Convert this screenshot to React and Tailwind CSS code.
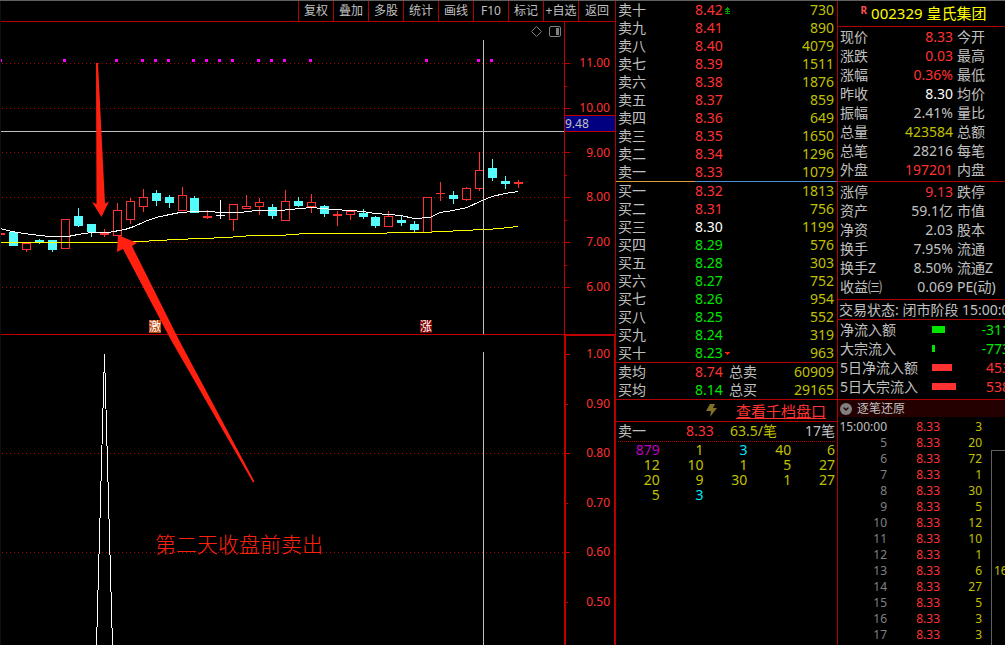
import { ChevronDown } from "lucide-react";

const RED = "#ff3232";
const CYAN = "#54fcfc";

const tools = ["复权", "叠加", "多股", "统计", "画线", "F10", "标记", "+自选", "返回"];

// [x, top, bottom, wickTop, wickBottom, kind]  r: hollow red, f: solid red, c: cyan, w: white
const candles = [
  [-4, 233, 234, 231, 238, "f"],
  [9, 232, 245, 232, 245, "c"],
  [22, 243, 249, 243, 251, "r"],
  [35, 240, 242, 239, 243, "c"],
  [48, 240, 249, 240, 251, "c"],
  [61, 219, 248, 219, 248, "r"],
  [74, 216, 225, 208, 226, "c"],
  [87, 224, 231, 224, 236, "c"],
  [100, 233, 234, 229, 236, "f"],
  [113, 210, 235, 203, 235, "r"],
  [126, 201, 219, 198, 223, "r"],
  [139, 197, 206, 189, 211, "r"],
  [152, 193, 200, 190, 205, "c"],
  [165, 197, 202, 195, 207, "c"],
  [178, 195, 210, 187, 210, "r"],
  [190, 198, 212, 196, 212, "c"],
  [203, 216, 217, 210, 218, "f"],
  [216, 215, 215, 200, 218, "w"],
  [229, 204, 219, 204, 230, "r"],
  [242, 206, 208, 195, 208, "r"],
  [255, 202, 206, 198, 214, "r"],
  [268, 207, 215, 204, 218, "c"],
  [281, 201, 220, 190, 220, "r"],
  [294, 201, 205, 197, 206, "c"],
  [307, 202, 206, 194, 212, "r"],
  [320, 206, 213, 205, 216, "c"],
  [333, 214, 215, 211, 225, "f"],
  [346, 211, 214, 211, 219, "r"],
  [359, 213, 216, 209, 218, "c"],
  [371, 217, 225, 216, 227, "c"],
  [384, 216, 226, 211, 226, "r"],
  [397, 220, 222, 216, 225, "c"],
  [410, 224, 229, 221, 231, "c"],
  [423, 197, 232, 197, 232, "r"],
  [436, 193, 193, 182, 200, "f"],
  [449, 195, 198, 191, 203, "c"],
  [462, 188, 199, 187, 200, "r"],
  [475, 170, 188, 152, 190, "r"],
  [488, 168, 177, 159, 180, "c"],
  [501, 181, 183, 176, 188, "c"],
  [514, 182, 183, 180, 187, "f"],
];

const signals = [-1, 63, 115, 141, 154, 167, 192, 205, 218, 231, 257, 270, 283, 309, 425, 477, 490];

const average =
  "0,228 12,231 24,233 40,235 50,236 68,236 78,234 91,232 108,232 125,229 134,226 145,221 156,217 165,215 180,212 194,211 210,211 220,212 240,212 256,210 280,210 300,208 312,207 333,209 350,210 363,211 375,213 401,215 414,218 430,217 440,212 453,210 467,207 480,201 492,196 505,193 518,191";
const baseline =
  "0,242 111,242 140,241 176,239 201,238 227,237 253,235 280,235 306,233 357,233 418,232 446,231 460,230 486,229 500,228 518,226";

const sells = [
  ["卖十", "8.42", 730],
  ["卖九", "8.41", 890],
  ["卖八", "8.40", 4079],
  ["卖七", "8.39", 1511],
  ["卖六", "8.38", 1876],
  ["卖五", "8.37", 859],
  ["卖四", "8.36", 649],
  ["卖三", "8.35", 1650],
  ["卖二", "8.34", 1296],
  ["卖一", "8.33", 1079],
];
const buys = [
  ["买一", "8.32", 1813],
  ["买二", "8.31", 756],
  ["买三", "8.30", 1199],
  ["买四", "8.29", 576],
  ["买五", "8.28", 303],
  ["买六", "8.27", 752],
  ["买七", "8.26", 954],
  ["买八", "8.25", 552],
  ["买九", "8.24", 319],
  ["买十", "8.23", 963],
];

const lots = ["879", "1", "3", "40", "6", "12", "10", "1", "5", "27", "20", "9", "30", "1", "27", "5", "3"];
const lotColor = { 0: "text-[#c000c0]", 2: "text-[#00e6ff]", 16: "text-[#00e6ff]" };

const red = "text-[#ff3232]";
const green = "text-[#00e600]";
const olive = "text-[#c0c000]";
const grey = "text-[#c0c0c0]";

const quoteTop = [
  ["现价", "8.33", "今开", red],
  ["涨跌", "0.03", "最高", red],
  ["涨幅", "0.36%", "最低", red],
  ["昨收", "8.30", "均价", "text-white"],
  ["振幅", "2.41%", "量比", grey],
  ["总量", "423584", "总额", olive],
  ["总笔", "28216", "每笔", grey],
  ["外盘", "197201", "内盘", red],
];
const quoteBottom = [
  ["涨停", "9.13", "跌停", red],
  ["资产", "59.1亿", "市值", grey],
  ["净资", "2.03", "股本", grey],
  ["换手", "7.95%", "流通", grey],
  ["换手Z", "8.50%", "流通Z", grey],
  ["收益㈢", "0.069", "PE(动)", grey],
];
const flows = [
  ["净流入额", 13, "-311", true],
  ["大宗流入", 3, "-773", true],
  ["5日净流入额", 20, "453", false],
  ["5日大宗流入", 24, "538", false],
];
const ticks = [
  ["15:00:00", 3], ["5", 20], ["6", 72], ["7", 1], ["8", 30], ["9", 5], ["10", 12],
  ["11", 10], ["12", 1], ["13", 6], ["14", 27], ["15", 5], ["16", 3], ["17", 3],
];

function priceColor(price) {
  if (price === "8.30") return "text-white";
  return price > "8.30" ? red : green;
}

function Candle({ data }) {
  const [x, top, bottom, wickTop, wickBottom, kind] = data;
  const color = kind === "c" ? CYAN : kind === "w" ? "#ffffff" : RED;
  const cx = x + 4;
  if (kind === "r") {
    return (
      <g fill={color}>
        {wickTop < top && <rect x={cx} y={wickTop} width="1" height={top - wickTop} />}
        {wickBottom > bottom && <rect x={cx} y={bottom} width="1" height={wickBottom - bottom + 1} />}
        <rect x={x + 0.5} y={top + 0.5} width="8" height={bottom - top} fill="none" stroke={color} />
      </g>
    );
  }
  return (
    <g fill={color}>
      <rect x={cx} y={wickTop} width="1" height={wickBottom - wickTop + 1} />
      <rect x={x} y={top} width="9" height={bottom - top + 1} />
    </g>
  );
}

function GridLine({ y }) {
  return <line x1="2" x2="564" y1={y + 0.5} y2={y + 0.5} stroke="#b00000" strokeDasharray="1 3" />;
}

function PriceChart() {
  return (
    <section className="relative flex flex-[312_1_0%] overflow-hidden">
      <svg
        className="absolute inset-0 size-full"
        viewBox="0 22 615 312"
        preserveAspectRatio="none"
        shapeRendering="crispEdges"
        aria-hidden="true"
      >
        {[63, 108, 152, 197, 242, 287].map((y) => (
          <g key={y}>
            <GridLine y={y} />
            <rect x="565" y={y} width="5" height="1" fill="#c00000" />
          </g>
        ))}
        {[86, 130, 175, 220, 265].map((y) => (
          <rect key={y} x="565" y={y} width="2" height="1" fill="#c00000" />
        ))}
        <rect x="564" y="22" width="1" height="312" fill="#c00000" />
        {signals.map((x) => (
          <rect key={x} x={x} y="59" width="3" height="3" fill="#ff00ff" />
        ))}
        <rect x="0" y="131" width="564" height="1" fill="#c0c0c0" />
        {candles.map((c) => (
          <Candle key={c[0]} data={c} />
        ))}
        <polyline points={average} transform="translate(0 .5)" fill="none" stroke="#ffffff" />
        <polyline points={baseline} transform="translate(0 .5)" fill="none" stroke="#ffff00" />
        <rect x="483" y="40" width="1" height="294" fill="#c0c0c0" />
        <g fill="none" stroke="#808080" shapeRendering="auto">
          <path d="M536.5 26.5l5 5-5 5-5-5z" />
          <rect x="549.5" y="26.5" width="11" height="10" rx="1.5" />
          <rect x="556" y="28" width="3" height="7" fill="#808080" stroke="none" />
        </g>
      </svg>
      <span className="absolute bottom-px left-[149px] bg-[#c04a10] text-[12px] leading-[13px] text-white">激</span>
      <span className="absolute bottom-px left-[420px] bg-[#800000] text-[12px] leading-[13px] text-white">涨</span>
      <div className="relative ml-auto flex w-[50px] flex-col justify-between pt-[31px] pr-[5px] pb-[37px] text-right text-[12px] leading-5 text-[#ff3232]">
        {["11.00", "10.00", "9.00", "8.00", "7.00", "6.00"].map((v) => (
          <span key={v}>{v}</span>
        ))}
        <span className="absolute top-[93px] left-0 w-full border-y border-[#c00000] bg-[#000080] text-left leading-[15px] text-[#c0c0c0]">
          9.48
        </span>
      </div>
    </section>
  );
}

function SignalChart() {
  return (
    <section className="relative flex flex-[310_1_0%] overflow-hidden">
      <svg
        className="absolute inset-0 size-full"
        viewBox="0 335 615 310"
        preserveAspectRatio="none"
        shapeRendering="crispEdges"
        aria-hidden="true"
      >
        <GridLine y={453} />
        <GridLine y={552} />
        {[354, 453, 552].map((y) => (
          <rect key={y} x="565" y={y} width="5" height="1" fill="#c00000" />
        ))}
        {[404, 503, 602].map((y) => (
          <rect key={y} x="565" y={y} width="3" height="1" fill="#c00000" />
        ))}
        <path d="M564 335h51v1h-49v309h-2z M614 335h1v310h-1z" fill="#c00000" />
        <path d="M96.5 645L104.5 354L112.5 645" fill="none" stroke="#ffffff" />
        <rect x="483" y="352" width="1" height="293" fill="#c0c0c0" />
      </svg>
      <p className="absolute top-[194px] left-[155px] text-[21px] leading-[30px] font-light text-[#ff2010]">
        第二天收盘前卖出
      </p>
      <div className="relative ml-auto flex w-[50px] flex-col justify-between pt-[9px] pr-[5px] pb-[33px] text-right text-[12px] leading-5 text-[#ff3232]">
        {["1.00", "0.90", "0.80", "0.70", "0.60", "0.50"].map((v) => (
          <span key={v}>{v}</span>
        ))}
      </div>
    </section>
  );
}

function Charts() {
  return (
    <main className="relative flex min-w-0 flex-1 flex-col">
      <nav className="flex h-[21px] justify-end border-b border-[#b00000]">
        {tools.map((t) => (
          <button
            key={t}
            type="button"
            className="w-[35px] border-l border-[#b00000] text-center text-[12px] leading-5 whitespace-nowrap last:w-[37px]"
          >
            {t}
          </button>
        ))}
      </nav>
      <PriceChart />
      <div className="h-px bg-[#c00000]" />
      <SignalChart />
      <svg
        className="pointer-events-none absolute inset-0 size-full"
        viewBox="0 1 615 644"
        preserveAspectRatio="none"
        aria-hidden="true"
      >
        <rect x="0" y="1" width="1" height="644" fill="#101010" />
        <g fill="#ff2010">
          <path d="M96 63L98 63L105 203.500L109 201.500L101.500 217L92 202L96.500 204z" />
          <path d="M118 235L137 243L132 246L179 340L254.500 481.500L253 482.500L171 340L123 249L117 252z" />
        </g>
      </svg>
    </main>
  );
}

function BookRows({ rows }) {
  return (
    <table className="w-full table-fixed text-[14px] leading-[18px]">
      <tbody>
        {rows.map(([label, price, volume]) => (
          <tr key={label}>
            <th scope="row" className="w-[79px] p-0 pl-[2px] text-left font-normal">{label}</th>
            <td className={"p-0 " + priceColor(price)}>
              <span className="flex items-center gap-[2px]">
                {price}
                {price === "8.42" && (
                  <svg width="5" height="7" viewBox="0 0 5 7" fill="#00a000" shapeRendering="crispEdges" aria-hidden="true">
                    <path d="M2 0h1v1h1v1h1v1H3v1h2v1H3v1h2v1H0V6h2V5H0V4h2V3H0V2h1V1h1z" />
                  </svg>
                )}
                {price === "8.23" && (
                  <svg width="5" height="3" viewBox="0 0 5 3" fill="#ff2010" shapeRendering="crispEdges" aria-hidden="true">
                    <path d="M0 0h5v1H4v1H3v1H2V2H1V1H0z" />
                  </svg>
                )}
              </span>
            </td>
            <td className="w-[60px] p-0 pr-[3px] text-right text-[#c0c000]">{volume}</td>
          </tr>
        ))}
      </tbody>
    </table>
  );
}

function OrderBook() {
  return (
    <section className="w-[222px] shrink-0 border-l border-[#b00000] text-[14px] leading-[18px]">
      <BookRows rows={sells} />
      <div className="flex h-px">
        <div className="w-[79px] bg-[#e0a040]" />
        <div className="flex-1 bg-[#4a90d9]" />
      </div>
      <BookRows rows={buys} />
      <div className="border-y border-[#b00000]">
        {[
          ["卖均", "8.74", "总卖", 60909, red],
          ["买均", "8.14", "总买", 29165, green],
        ].map(([a, p, b, v, c]) => (
          <div key={a} className="flex pr-[3px] pl-[2px]">
            <span className="w-[77px]">{a}</span>
            <span className={"w-[34px] " + c}>{p}</span>
            <span>{b}</span>
            <span className="ml-auto text-[#c0c000]">{v}</span>
          </div>
        ))}
      </div>
      <div className="flex h-[22px] items-center justify-end gap-[19px] border-b border-[#b00000] pr-[11px]">
        <svg width="11" height="13" viewBox="0 0 11 13" fill="#807028" aria-hidden="true">
          <path d="M4 0h5L7 4h4L4 13l1-6H0z" />
        </svg>
        <button type="button" className="text-[15px] leading-[20px] text-[#ff3232] underline">查看千档盘口</button>
      </div>
      <div className="mx-[2px] flex h-5 items-start border-b border-dotted border-[#b00000]">
        <span className="w-[68px]">卖一</span>
        <span className="w-11 text-[#ff3232]">8.33</span>
        <span className="text-[#c0c000]">63.5/笔</span>
        <span className="ml-auto">17笔</span>
      </div>
      <div className="mr-[2px] grid grid-cols-5 text-right leading-[15px]">
        {lots.map((n, i) => (
          <span key={i} className={lotColor[i] || olive}>{n}</span>
        ))}
      </div>
    </section>
  );
}

function QuoteRows({ rows }) {
  return (
    <table className="w-full table-fixed text-[14px] leading-[19px] whitespace-nowrap">
      <tbody>
        {rows.map(([label, value, next, color]) => (
          <tr key={label}>
            <th scope="row" className="w-[52px] p-0 pl-[2px] text-left font-normal">{label}</th>
            <td className={"w-[63px] p-0 text-right " + color}>{value}</td>
            <td className="p-0 pl-1">{next}</td>
          </tr>
        ))}
      </tbody>
    </table>
  );
}

function QuotePanel() {
  return (
    <aside className="flex w-[168px] shrink-0 flex-col overflow-hidden border-l border-[#b00000] text-[14px] whitespace-nowrap">
      <header className="flex h-[26px] justify-center gap-1 border-b border-[#b00000] pl-1">
        <span className="pt-[3px] text-[10px] leading-3 font-bold text-[#ff5050]">R</span>
        <h1 className="text-[15px] leading-6 text-[#ffff00]">002329 皇氏集团</h1>
      </header>
      <div className="border-b border-[#b00000] pb-[2px]">
        <QuoteRows rows={quoteTop} />
      </div>
      <div className="border-b border-[#b00000] pb-[3px]">
        <QuoteRows rows={quoteBottom} />
      </div>
      <p className="border-b border-[#b00000] pl-px leading-[19px]">交易状态: 闭市阶段 15:00:00</p>
      <div className="border-b border-[#b00000] pb-[3px] leading-[19px]">
        {flows.map(([label, width, value, down]) => (
          <div key={label} className="flex w-[172px] items-center pl-[2px]">
            <span className="w-[92px]">{label}</span>
            <span className={"h-[7px] " + (down ? "bg-[#00e600]" : "bg-[#ff3232]")} style={{ width }} />
            <span className={"ml-auto " + (down ? green : red)}>{value}</span>
          </div>
        ))}
      </div>
      <h2 className="flex items-center gap-[5px] bg-[#240000] pl-[2px] text-[12px] leading-[17px]">
        <span className="grid size-3 place-items-center rounded-full bg-[#808080] text-[#240000]">
          <ChevronDown size={8} strokeWidth={4} />
        </span>
        逐笔还原
      </h2>
      <div className="flex flex-1">
        <table className="mt-[2px] w-[144px] shrink-0 table-fixed self-start text-right text-[12px] leading-4">
          <tbody>
            {ticks.map(([time, volume], i) => (
              <tr key={time}>
                <td className={"w-[49px] p-0 " + (i === 0 ? grey : "text-[#808080]")}>{time}</td>
                <td className="w-[53px] p-0 text-[#ff3232]">8.33</td>
                <td className="p-0 text-[#c0c000]">{volume}</td>
              </tr>
            ))}
          </tbody>
        </table>
        <div className="mt-[33px] ml-[9px] min-w-0 flex-1 border-t border-l border-[#606060] pt-[112px] pl-[2px] text-[12px] leading-4 text-[#c0c000]">
          16
        </div>
      </div>
    </aside>
  );
}

export default function App() {
  return (
    <div className="flex min-h-screen border-t border-[#606060] bg-black font-['Noto_Sans','Noto_Sans_CJK_SC',sans-serif] text-[#c0c0c0]">
      <Charts />
      <OrderBook />
      <QuotePanel />
    </div>
  );
}
